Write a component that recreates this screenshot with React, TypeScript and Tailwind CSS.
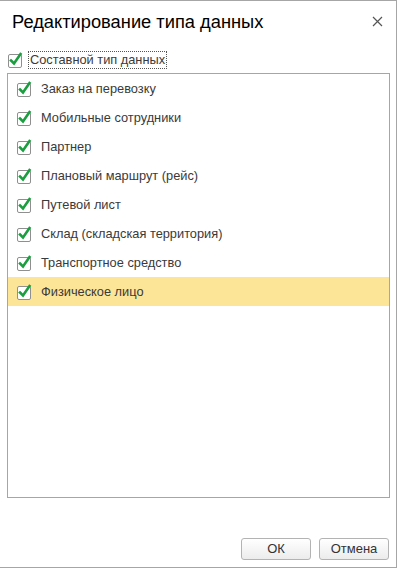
const ITEMS = [
  "Заказ на перевозку",
  "Мобильные сотрудники",
  "Партнер",
  "Плановый маршрут (рейс)",
  "Путевой лист",
  "Склад (складская территория)",
  "Транспортное средство",
  "Физическое лицо",
];

function Check() {
  return (
    <svg width="16" height="16" viewBox="0 0 16 16" className="shrink-0">
      <rect x="0.5" y="2.5" width="13" height="13" rx="1.5" fill="#fff" stroke="#8f8f8f" />
      <path d="M3 8.5 L6 11.5 L12.5 2" fill="none" stroke="#1a9e3f" strokeWidth="2.6" strokeLinecap="square" />
    </svg>
  );
}

export default function App() {
  return (
    <div
      className="flex h-[569px] w-[398px] flex-col bg-white text-[12.8px] text-[#3a3a3a]"
      style={{ fontFamily: '"Liberation Sans", Arial, sans-serif' }}
    >
      <div className="flex h-[568px] w-[397px] flex-col border-t border-r border-b border-[#a6a6a6]">
        <div className="flex h-[41px] items-center justify-between pl-[12px] pr-[13px]">
          <span className="text-[18.3px] text-black">Редактирование типа данных</span>
          <svg width="11" height="11" viewBox="0 0 11 11">
            <path d="M1 1 L10 10 M10 1 L1 10" stroke="#555" strokeWidth="1.2" />
          </svg>
        </div>
        <div className="mt-[9px] flex h-[18px] items-center pl-[8px]">
          <Check />
          <span className="ml-[4px] border border-dotted border-[#555] px-[1px] leading-[16px]">
            Составной тип данных
          </span>
        </div>
        <div className="ml-[7px] mt-[4px] h-[425px] w-[383px] border border-[#a6a6a6]">
          {ITEMS.map((t, i) => (
            <div
              key={t}
              className={`flex h-[29px] items-center pl-[9px] ${i === ITEMS.length - 1 ? "bg-[#fce597]" : ""}`}
            >
              <Check />
              <span className="ml-[8px]">{t}</span>
            </div>
          ))}
        </div>
        <div className="mt-[40px] flex justify-end gap-[8px] pr-[7px]">
          <button className="h-[22px] w-[70px] rounded-[3px] border border-[#b3b3b3] bg-gradient-to-b from-white to-[#ececec] text-[13px] text-[#333]">
            ОК
          </button>
          <button className="h-[22px] w-[70px] rounded-[3px] border border-[#b3b3b3] bg-gradient-to-b from-white to-[#ececec] text-[13px] text-[#333]">
            Отмена
          </button>
        </div>
      </div>
    </div>
  );
}
